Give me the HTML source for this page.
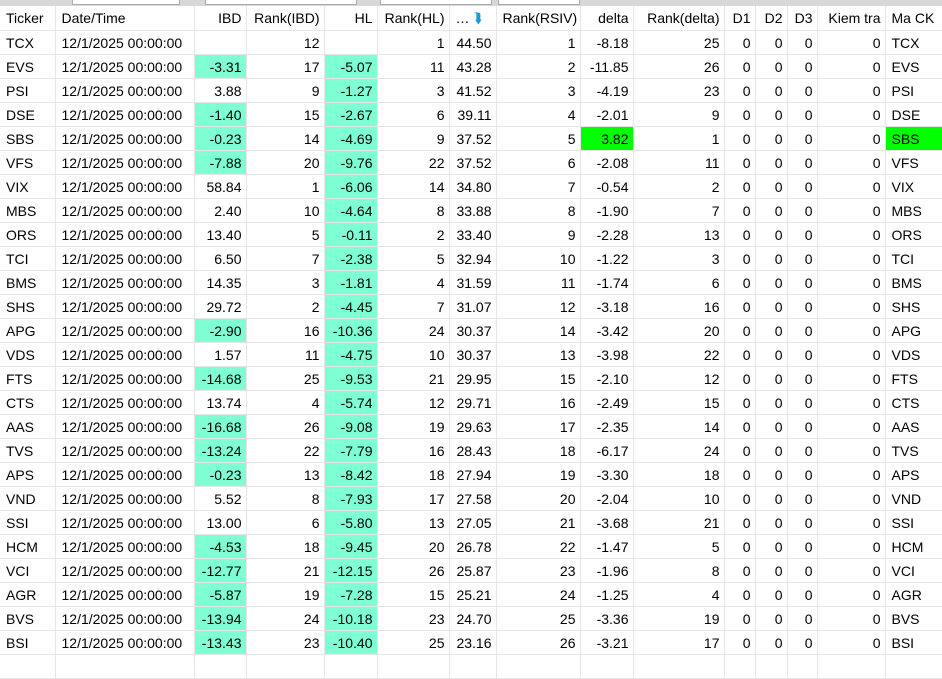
<!DOCTYPE html>
<html><head><meta charset="utf-8"><style>
body{margin:0;width:942px;height:658px;overflow:hidden;background:#fff;font-family:"Liberation Sans",sans-serif;font-size:14px;color:#000}
.bar{position:absolute;left:0;top:0;width:942px;height:6px;background:#d8d8d8}
.bar div{position:absolute;top:0;height:4px;background:#fff;border:1px solid #aaa;border-top:none}
table{position:absolute;left:0;top:6px;width:942px;border-collapse:collapse;table-layout:fixed}
td{border-right:1px solid #e6e6e6;border-bottom:1px solid #e6e6e6;height:23px;padding:0 4px 0 6px;white-space:nowrap;overflow:hidden;text-align:right}
tr.h td{height:24px}
td.l{text-align:left}
.a{background:#7fffd4}.g{background:#00ff00}
</style></head><body>
<div class="bar"><div style="left:72px;width:106px"></div><div style="left:205px;width:150px"></div><div style="left:380px;width:110px"></div><div style="left:498px;width:80px"></div></div>
<table>
<colgroup><col style="width:55px"><col style="width:139px"><col style="width:52px"><col style="width:78px"><col style="width:53px"><col style="width:72px"><col style="width:47px"><col style="width:84px"><col style="width:53px"><col style="width:91px"><col style="width:31px"><col style="width:32px"><col style="width:30px"><col style="width:68px"><col style="width:57px"></colgroup>
<tr class="h"><td class="l">Ticker</td><td class="l">Date/Time</td><td>IBD</td><td>Rank(IBD)</td><td>HL</td><td>Rank(HL)</td><td class="l">… <span style="color:#1a9ad6">⮯</span></td><td>Rank(RSIV)</td><td>delta</td><td>Rank(delta)</td><td>D1</td><td>D2</td><td>D3</td><td>Kiem tra</td><td class="l">Ma CK</td></tr>
<tr><td class="l">TCX</td><td class="l">12/1/2025 00:00:00</td><td></td><td>12</td><td></td><td>1</td><td>44.50</td><td>1</td><td>-8.18</td><td>25</td><td>0</td><td>0</td><td>0</td><td>0</td><td class="l">TCX</td></tr>
<tr><td class="l">EVS</td><td class="l">12/1/2025 00:00:00</td><td class="a">-3.31</td><td>17</td><td class="a">-5.07</td><td>11</td><td>43.28</td><td>2</td><td>-11.85</td><td>26</td><td>0</td><td>0</td><td>0</td><td>0</td><td class="l">EVS</td></tr>
<tr><td class="l">PSI</td><td class="l">12/1/2025 00:00:00</td><td>3.88</td><td>9</td><td class="a">-1.27</td><td>3</td><td>41.52</td><td>3</td><td>-4.19</td><td>23</td><td>0</td><td>0</td><td>0</td><td>0</td><td class="l">PSI</td></tr>
<tr><td class="l">DSE</td><td class="l">12/1/2025 00:00:00</td><td class="a">-1.40</td><td>15</td><td class="a">-2.67</td><td>6</td><td>39.11</td><td>4</td><td>-2.01</td><td>9</td><td>0</td><td>0</td><td>0</td><td>0</td><td class="l">DSE</td></tr>
<tr><td class="l">SBS</td><td class="l">12/1/2025 00:00:00</td><td class="a">-0.23</td><td>14</td><td class="a">-4.69</td><td>9</td><td>37.52</td><td>5</td><td class="g">3.82</td><td>1</td><td>0</td><td>0</td><td>0</td><td>0</td><td class="l g">SBS</td></tr>
<tr><td class="l">VFS</td><td class="l">12/1/2025 00:00:00</td><td class="a">-7.88</td><td>20</td><td class="a">-9.76</td><td>22</td><td>37.52</td><td>6</td><td>-2.08</td><td>11</td><td>0</td><td>0</td><td>0</td><td>0</td><td class="l">VFS</td></tr>
<tr><td class="l">VIX</td><td class="l">12/1/2025 00:00:00</td><td>58.84</td><td>1</td><td class="a">-6.06</td><td>14</td><td>34.80</td><td>7</td><td>-0.54</td><td>2</td><td>0</td><td>0</td><td>0</td><td>0</td><td class="l">VIX</td></tr>
<tr><td class="l">MBS</td><td class="l">12/1/2025 00:00:00</td><td>2.40</td><td>10</td><td class="a">-4.64</td><td>8</td><td>33.88</td><td>8</td><td>-1.90</td><td>7</td><td>0</td><td>0</td><td>0</td><td>0</td><td class="l">MBS</td></tr>
<tr><td class="l">ORS</td><td class="l">12/1/2025 00:00:00</td><td>13.40</td><td>5</td><td class="a">-0.11</td><td>2</td><td>33.40</td><td>9</td><td>-2.28</td><td>13</td><td>0</td><td>0</td><td>0</td><td>0</td><td class="l">ORS</td></tr>
<tr><td class="l">TCI</td><td class="l">12/1/2025 00:00:00</td><td>6.50</td><td>7</td><td class="a">-2.38</td><td>5</td><td>32.94</td><td>10</td><td>-1.22</td><td>3</td><td>0</td><td>0</td><td>0</td><td>0</td><td class="l">TCI</td></tr>
<tr><td class="l">BMS</td><td class="l">12/1/2025 00:00:00</td><td>14.35</td><td>3</td><td class="a">-1.81</td><td>4</td><td>31.59</td><td>11</td><td>-1.74</td><td>6</td><td>0</td><td>0</td><td>0</td><td>0</td><td class="l">BMS</td></tr>
<tr><td class="l">SHS</td><td class="l">12/1/2025 00:00:00</td><td>29.72</td><td>2</td><td class="a">-4.45</td><td>7</td><td>31.07</td><td>12</td><td>-3.18</td><td>16</td><td>0</td><td>0</td><td>0</td><td>0</td><td class="l">SHS</td></tr>
<tr><td class="l">APG</td><td class="l">12/1/2025 00:00:00</td><td class="a">-2.90</td><td>16</td><td class="a">-10.36</td><td>24</td><td>30.37</td><td>14</td><td>-3.42</td><td>20</td><td>0</td><td>0</td><td>0</td><td>0</td><td class="l">APG</td></tr>
<tr><td class="l">VDS</td><td class="l">12/1/2025 00:00:00</td><td>1.57</td><td>11</td><td class="a">-4.75</td><td>10</td><td>30.37</td><td>13</td><td>-3.98</td><td>22</td><td>0</td><td>0</td><td>0</td><td>0</td><td class="l">VDS</td></tr>
<tr><td class="l">FTS</td><td class="l">12/1/2025 00:00:00</td><td class="a">-14.68</td><td>25</td><td class="a">-9.53</td><td>21</td><td>29.95</td><td>15</td><td>-2.10</td><td>12</td><td>0</td><td>0</td><td>0</td><td>0</td><td class="l">FTS</td></tr>
<tr><td class="l">CTS</td><td class="l">12/1/2025 00:00:00</td><td>13.74</td><td>4</td><td class="a">-5.74</td><td>12</td><td>29.71</td><td>16</td><td>-2.49</td><td>15</td><td>0</td><td>0</td><td>0</td><td>0</td><td class="l">CTS</td></tr>
<tr><td class="l">AAS</td><td class="l">12/1/2025 00:00:00</td><td class="a">-16.68</td><td>26</td><td class="a">-9.08</td><td>19</td><td>29.63</td><td>17</td><td>-2.35</td><td>14</td><td>0</td><td>0</td><td>0</td><td>0</td><td class="l">AAS</td></tr>
<tr><td class="l">TVS</td><td class="l">12/1/2025 00:00:00</td><td class="a">-13.24</td><td>22</td><td class="a">-7.79</td><td>16</td><td>28.43</td><td>18</td><td>-6.17</td><td>24</td><td>0</td><td>0</td><td>0</td><td>0</td><td class="l">TVS</td></tr>
<tr><td class="l">APS</td><td class="l">12/1/2025 00:00:00</td><td class="a">-0.23</td><td>13</td><td class="a">-8.42</td><td>18</td><td>27.94</td><td>19</td><td>-3.30</td><td>18</td><td>0</td><td>0</td><td>0</td><td>0</td><td class="l">APS</td></tr>
<tr><td class="l">VND</td><td class="l">12/1/2025 00:00:00</td><td>5.52</td><td>8</td><td class="a">-7.93</td><td>17</td><td>27.58</td><td>20</td><td>-2.04</td><td>10</td><td>0</td><td>0</td><td>0</td><td>0</td><td class="l">VND</td></tr>
<tr><td class="l">SSI</td><td class="l">12/1/2025 00:00:00</td><td>13.00</td><td>6</td><td class="a">-5.80</td><td>13</td><td>27.05</td><td>21</td><td>-3.68</td><td>21</td><td>0</td><td>0</td><td>0</td><td>0</td><td class="l">SSI</td></tr>
<tr><td class="l">HCM</td><td class="l">12/1/2025 00:00:00</td><td class="a">-4.53</td><td>18</td><td class="a">-9.45</td><td>20</td><td>26.78</td><td>22</td><td>-1.47</td><td>5</td><td>0</td><td>0</td><td>0</td><td>0</td><td class="l">HCM</td></tr>
<tr><td class="l">VCI</td><td class="l">12/1/2025 00:00:00</td><td class="a">-12.77</td><td>21</td><td class="a">-12.15</td><td>26</td><td>25.87</td><td>23</td><td>-1.96</td><td>8</td><td>0</td><td>0</td><td>0</td><td>0</td><td class="l">VCI</td></tr>
<tr><td class="l">AGR</td><td class="l">12/1/2025 00:00:00</td><td class="a">-5.87</td><td>19</td><td class="a">-7.28</td><td>15</td><td>25.21</td><td>24</td><td>-1.25</td><td>4</td><td>0</td><td>0</td><td>0</td><td>0</td><td class="l">AGR</td></tr>
<tr><td class="l">BVS</td><td class="l">12/1/2025 00:00:00</td><td class="a">-13.94</td><td>24</td><td class="a">-10.18</td><td>23</td><td>24.70</td><td>25</td><td>-3.36</td><td>19</td><td>0</td><td>0</td><td>0</td><td>0</td><td class="l">BVS</td></tr>
<tr><td class="l">BSI</td><td class="l">12/1/2025 00:00:00</td><td class="a">-13.43</td><td>23</td><td class="a">-10.40</td><td>25</td><td>23.16</td><td>26</td><td>-3.21</td><td>17</td><td>0</td><td>0</td><td>0</td><td>0</td><td class="l">BSI</td></tr>
<tr><td></td><td></td><td></td><td></td><td></td><td></td><td></td><td></td><td></td><td></td><td></td><td></td><td></td><td></td><td></td></tr>
</table>
</body></html>
